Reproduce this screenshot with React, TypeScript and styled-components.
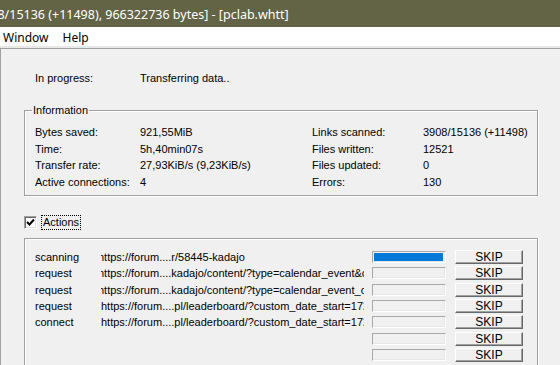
import React from "react";
import styled, { createGlobalStyle } from "styled-components";

const GlobalStyle = createGlobalStyle`
  html, body {
    margin: 0;
    padding: 0;
    background: #f0f0f0;
    overflow: hidden;
  }
  * {
    box-sizing: border-box;
  }
`;

const Window = styled.div`
  width: 560px;
  height: 365px;
  overflow: hidden;
  display: flex;
  flex-direction: column;
  font-family: "Liberation Sans", Arial, sans-serif;
  background: #f0f0f0;
`;

const TitleBar = styled.div`
  height: 27px;
  flex-shrink: 0;
  background: #636446;
  color: #ffffff;
  line-height: 27px;
  white-space: nowrap;
  overflow: hidden;
`;

const TitleText = styled.span`
  display: inline-block;
  margin-left: -24px;
  font-family: "Noto Sans", "Liberation Sans", sans-serif;
  font-size: 12.5px;
`;

const MenuBar = styled.div`
  height: 21px;
  flex-shrink: 0;
  background: #ffffff;
  border-bottom: 2px solid #e8e8e8;
  display: flex;
  align-items: center;
  padding-left: 3px;
  gap: 14px;
  font-family: "Noto Sans", "Liberation Sans", sans-serif;
  font-size: 12px;
  color: #000;
`;

const MenuItem = styled.span`
  padding-top: 1px;
`;

const Client = styled.div`
  flex: 1;
  border-top: 1px solid #a0a0a0;
  border-left: 1px solid #a0a0a0;
  padding: 23px 22px 0 23px;
  font-size: 11px;
  color: #000;
  display: flex;
  flex-direction: column;
`;

const StatusRow = styled.div`
  display: grid;
  grid-template-columns: 105px auto;
  padding-left: 11px;
  line-height: 13px;
`;

const GroupBox = styled.fieldset`
  margin: 19px 0 0 0;
  padding: 7px 0 5px 10px;
  border: 1px solid #a0a0a0;
  box-shadow: 1px 1px 0 #ffffff, inset 1px 1px 0 #ffffff;
  min-width: 0;
`;

const GroupLegend = styled.legend`
  padding: 0 1px;
  margin-left: -3px;
  line-height: 13px;
`;

const InfoGrid = styled.div`
  display: grid;
  grid-template-columns: 105px 172px 111px auto;
  grid-auto-rows: 16.5px;
  align-items: center;
`;

const CheckRow = styled.div`
  display: flex;
  align-items: center;
  gap: 4px;
  margin-top: 19px;
  height: 15px;
`;

const CheckBox = styled.span`
  width: 13px;
  height: 13px;
  background: #ffffff;
  border-top: 1px solid #a0a0a0;
  border-left: 1px solid #a0a0a0;
  border-right: 1px solid #ffffff;
  border-bottom: 1px solid #ffffff;
  box-shadow: inset 1px 1px 0 #696969, inset -1px -1px 0 #e3e3e3;
  display: flex;
  align-items: center;
  justify-content: center;
`;

const FocusLabel = styled.span`
  border: 1px dotted #000;
  padding: 0 1px;
  line-height: 13px;
`;

const ActionsBox = styled.div`
  margin-top: 8px;
  flex: 1;
  border: 1px solid #a0a0a0;
  border-bottom: none;
  box-shadow: 1px 0 0 #ffffff, inset 1px 1px 0 #ffffff;
  padding: 10px 0 0 10px;
`;

const ActionGrid = styled.div`
  display: grid;
  grid-template-columns: 66px 271px 74px 77px;
  grid-auto-rows: 16.33px;
  align-items: center;
`;

const Url = styled.div<{ $cut?: boolean }>`
  white-space: nowrap;
  overflow: hidden;
  margin-right: 8px;
  text-indent: ${({ $cut }) => ($cut ? "-3px" : "0")};
`;

const Bar = styled.div`
  height: 12px;
  border-top: 1px solid #a8a8a8;
  border-left: 1px solid #a8a8a8;
  border-right: 1px solid #ffffff;
  border-bottom: 1px solid #ffffff;
  box-shadow: inset -1px -1px 0 #e6e6e6;
  padding: 1px 2px 1px 1px;
  background: #f0f0f0;
`;

const BarFill = styled.div`
  height: 100%;
  background: #0078d7;
`;

const SkipButton = styled.div`
  margin-left: 9px;
  width: 68px;
  height: 14px;
  background: #f0f0f0;
  border-top: 1px solid #ffffff;
  border-left: 1px solid #ffffff;
  border-right: 1px solid #696969;
  border-bottom: 1px solid #696969;
  box-shadow: inset -1px -1px 0 #a0a0a0;
  display: flex;
  align-items: center;
  justify-content: center;
  font-size: 12px;
  line-height: 12px;
  color: #000;
`;

const info = [
  ["Bytes saved:", "921,55MiB", "Links scanned:", "3908/15136 (+11498)"],
  ["Time:", "5h,40min07s", "Files written:", "12521"],
  ["Transfer rate:", "27,93KiB/s (9,23KiB/s)", "Files updated:", "0"],
  ["Active connections:", "4", "Errors:", "130"],
];

type Action = { kind: string; url: string; cut?: boolean; busy?: boolean };

const actions: Action[] = [
  { kind: "scanning", url: "https://forum....r/58445-kadajo", cut: true, busy: true },
  { kind: "request", url: "https://forum....kadajo/content/?type=calendar_event&change_section=1", cut: true },
  { kind: "request", url: "https://forum....kadajo/content/?type=calendar_event_comment", cut: true },
  { kind: "request", url: "https://forum....pl/leaderboard/?custom_date_start=1727740800" },
  { kind: "connect", url: "https://forum....pl/leaderboard/?custom_date_start=1727740800" },
  { kind: "", url: "" },
  { kind: "", url: "" },
];

export default function App() {
  return (
    <Window>
      <GlobalStyle />
      <TitleBar>
        <TitleText>3908/15136 (+11498), 966322736 bytes] - [pclab.whtt]</TitleText>
      </TitleBar>
      <MenuBar>
        <MenuItem>Window</MenuItem>
        <MenuItem>Help</MenuItem>
      </MenuBar>
      <Client>
        <StatusRow>
          <span>In progress:</span>
          <span>Transferring data..</span>
        </StatusRow>
        <GroupBox>
          <GroupLegend>Information</GroupLegend>
          <InfoGrid>
            {info.map((r) => r.map((c, i) => <span key={r[0] + i}>{c}</span>))}
          </InfoGrid>
        </GroupBox>
        <CheckRow>
          <CheckBox>
            <svg width="9" height="9" viewBox="0 0 9 9">
              <path d="M1 4 L3.5 6.5 L8 1.5" stroke="#000" strokeWidth="2" fill="none" />
            </svg>
          </CheckBox>
          <FocusLabel>Actions</FocusLabel>
        </CheckRow>
        <ActionsBox>
          <ActionGrid>
            {actions.map((a, i) => (
              <React.Fragment key={i}>
                <span>{a.kind}</span>
                <Url $cut={a.cut}>{a.url}</Url>
                <Bar>{a.busy && <BarFill />}</Bar>
                <SkipButton>SKIP</SkipButton>
              </React.Fragment>
            ))}
          </ActionGrid>
        </ActionsBox>
      </Client>
    </Window>
  );
}
